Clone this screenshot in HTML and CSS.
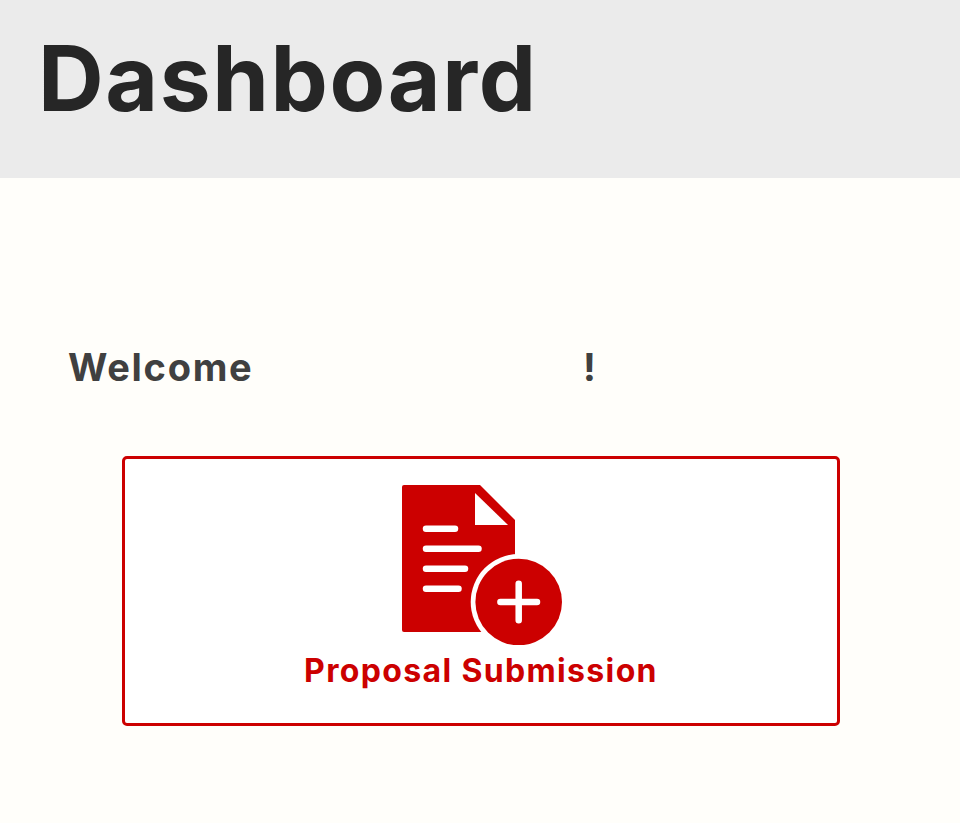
FILE: index.html
```html
<!DOCTYPE html>
<html lang="en">
<head>
<meta charset="utf-8">
<title>Dashboard</title>
<link rel="stylesheet" href="styles.css">
</head>
<body>
<header class="page-header"><h1>Dashboard</h1></header>
<main class="content">
<p class="welcome"><span class="welcome-word">Welcome</span><span class="welcome-mark">!</span></p>
<a class="card" href="#">
<svg class="card-icon" viewBox="0 0 160 160" aria-hidden="true">
<path fill="#cc0000" d="M2 0H78L113 35V147H2Q0 147 0 145V2Q0 0 2 0Z"/>
<path fill="#fff" d="M73 8V40H106Z"/>
<g stroke="#fff" stroke-width="6.5" stroke-linecap="round">
<path d="M24 43.7H53"/><path d="M24 63.7H76.5"/><path d="M24 83.7H63"/><path d="M24 103.7H56.5"/>
</g>
<circle cx="116.7" cy="117" r="48" fill="#fff"/>
<circle cx="116.7" cy="117" r="43.3" fill="#cc0000"/>
<path stroke="#fff" stroke-width="6.5" stroke-linecap="round" d="M116.7 98.7V135.3M98.4 117H135"/>
</svg>
<span class="card-label">Proposal Submission</span>
</a>
</main>
</body>
</html>
```
FILE: styles.css
```css
* { box-sizing: border-box; }
html, body { margin: 0; padding: 0; }
body { background: #fffefa; font-family: "Inter", "Liberation Sans", sans-serif; height: 823px; overflow: hidden; }
.page-header { background: #ebebeb; height: 178px; padding: 26px 38px 0; }
.page-header h1 { margin: 0; font-size: 91px; line-height: 104px; font-weight: 650; color: #262626; letter-spacing: 1.6px; }
.content { display: flex; flex-direction: column; padding: 167px 120px 0 68px; }
.welcome { margin: 0; display: flex; font-size: 38px; line-height: 44px; font-weight: 700; color: #404040; letter-spacing: 1.7px; }
.welcome-word { width: 515px; }
.card { display: flex; flex-direction: column; align-items: center; margin: 67px 0 0 54px; width: 718px; height: 270px; padding: 26px 0 0; background: #fff; border: 3px solid #cc0000; border-radius: 5px; text-decoration: none; }
.card-icon { width: 160px; height: 160px; display: block; margin-left: 2px; }
.card-label { font-size: 32px; line-height: 36px; font-weight: 700; color: #cc0000; margin-top: 8px; letter-spacing: 1.35px; }
```
